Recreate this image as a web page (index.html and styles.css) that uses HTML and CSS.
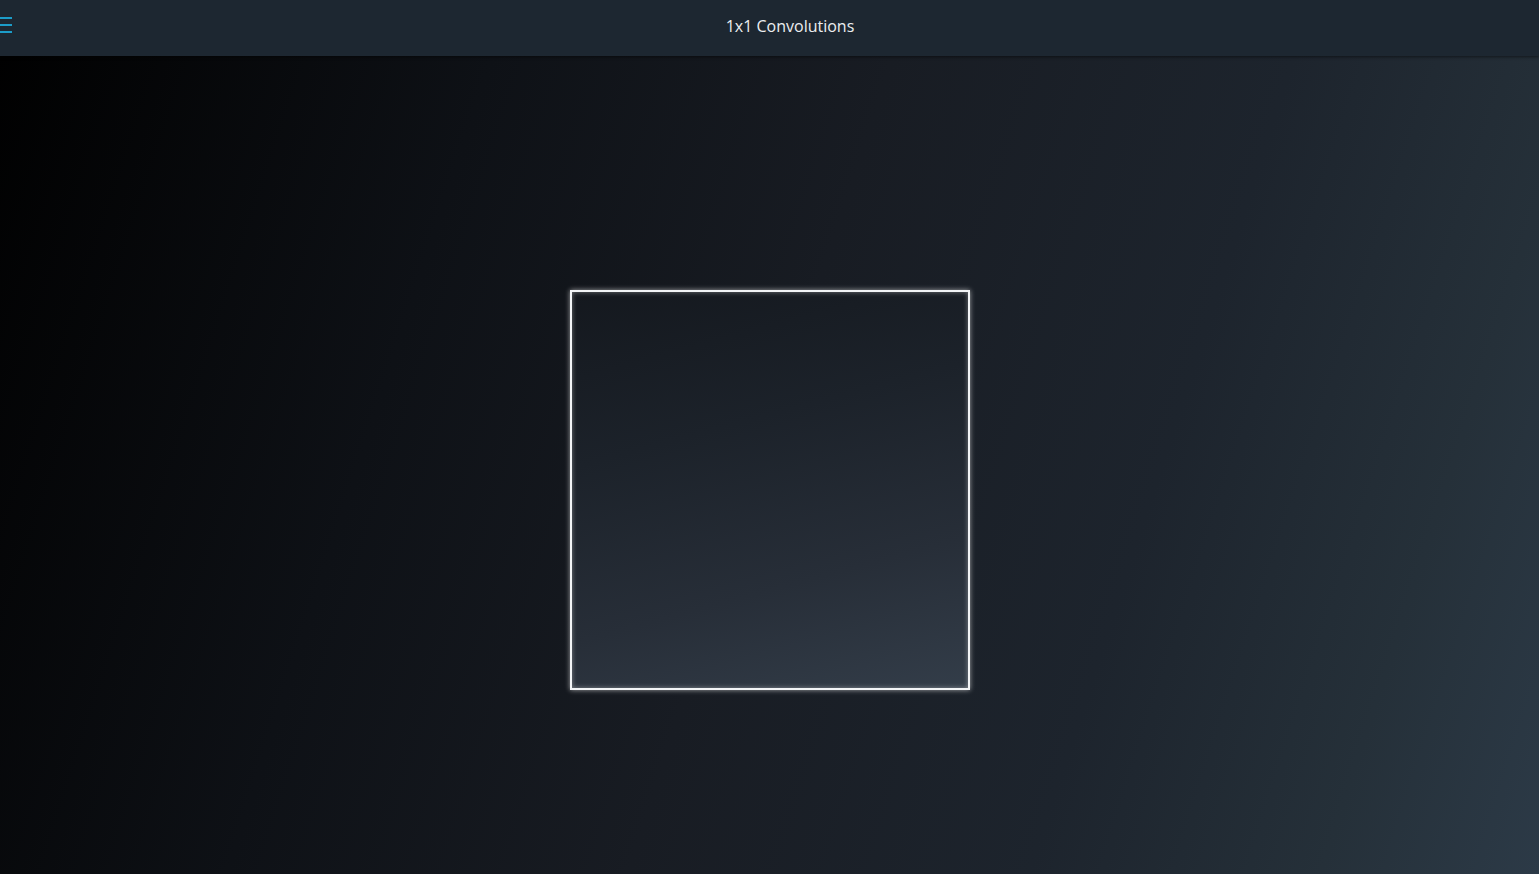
FILE: index.html
```html
<!DOCTYPE html>
<html>
<head>
<meta charset="utf-8">
<title>1x1 Convolutions</title>
<link rel="stylesheet" href="styles.css">
</head>
<body>
<header class="topbar">
  <button class="menu-btn" aria-label="Menu">
    <svg width="12" height="16" viewBox="0 0 12 16"><rect x="0" y="0" width="12" height="2" fill="#1c9cc8"/><rect x="0" y="7" width="12" height="2" fill="#1c9cc8"/><rect x="0" y="14" width="12" height="2" fill="#1c9cc8"/></svg>
  </button>
  <h1 class="title">1x1 Convolutions</h1>
</header>
<main class="stage">
  <div class="canvas-box"></div>
</main>
</body>
</html>
```
FILE: styles.css
```css
html, body {
  margin: 0;
  padding: 0;
  height: 100%;
}
body {
  font-family: "Open Sans", "Noto Sans", sans-serif;
  background: linear-gradient(108deg, #000000 0%, #0e1116 28%, #181c23 50%, #1d242d 72%, #253039 88%, #2c3a47 100%);
  overflow: hidden;
}
.topbar {
  height: 56px;
  background: #1d2731;
  display: flex;
  align-items: center;
  box-shadow: 0 1px 3px rgba(0,0,0,0.5);
}
.menu-btn {
  width: 41px;
  height: 56px;
  border: 0;
  background: transparent;
  display: flex;
  align-items: flex-start;
  padding: 17px 0 0 0;
  box-sizing: border-box;
  flex: none;
}
.title {
  flex: 1;
  margin: 0;
  text-align: center;
  font-size: 16px;
  font-weight: 400;
  color: #eceef0;
  padding-bottom: 4px;
}
.stage {
  height: 818px;
  display: flex;
  justify-content: center;
  align-items: flex-start;
  padding-top: 234px;
  box-sizing: border-box;
}
.canvas-box {
  width: 400px;
  height: 400px;
  box-sizing: border-box;
  border: 2px solid #f2f4f6;
  background: linear-gradient(165deg, #14181e 0%, #1c222a 35%, #272e38 70%, #333d49 100%);
  box-shadow: 0 0 5px rgba(255,255,255,0.6), inset 0 0 5px rgba(255,255,255,0.4);
}
```
